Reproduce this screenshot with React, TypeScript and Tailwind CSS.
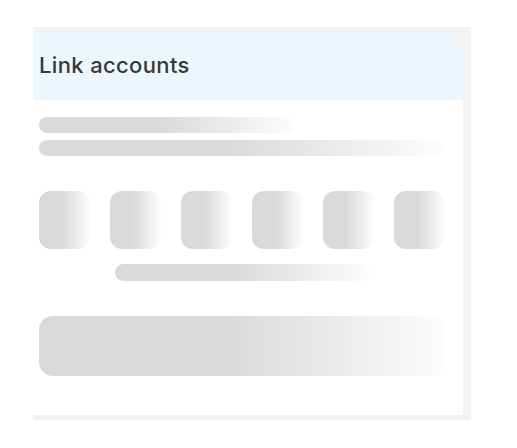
import React from "react";

const grad = "bg-linear-to-r from-[#d9d9d9] from-45% to-[#fdfdfd]";

export default function App() {
  const squares = [0, 1, 2, 3, 4, 5];
  return (
    <div className="w-[517px] h-[448px] bg-white pt-[27px] pl-[33px]" style={{ fontFamily: "Inter, 'Liberation Sans', sans-serif" }}>
      <div className="w-[438px] h-[393px] bg-[#f3f3f3] pt-[5px] pr-[8px] pb-[5px]">
        <div className="w-full h-full bg-white rounded-tr-[20px] overflow-hidden flex flex-col">
          <div className="h-[68px] bg-[#eef6fd] flex items-center pl-[6px] pb-[3px]">
            <span className="text-[22px] font-medium text-[#383838] leading-none tracking-[0.35px]">Link accounts</span>
          </div>
          <div className="flex flex-col px-[6px] pt-[17px]">
            <div className={`w-[256px] h-[16px] rounded-full ${grad}`} />
            <div className={`mt-[7px] w-[404px] h-[16px] rounded-full ${grad}`} />
            <div className="mt-[35px] flex gap-[20px]">
              {squares.map((i) => (
                <div key={i} className={`w-[51px] h-[58px] rounded-[12px] ${grad}`} />
              ))}
            </div>
            <div className={`mt-[15px] ml-[76px] w-[255px] h-[17px] rounded-full ${grad}`} />
            <div className={`mt-[35px] w-[407px] h-[60px] rounded-[14px] ${grad}`} />
          </div>
        </div>
      </div>
    </div>
  );
}
